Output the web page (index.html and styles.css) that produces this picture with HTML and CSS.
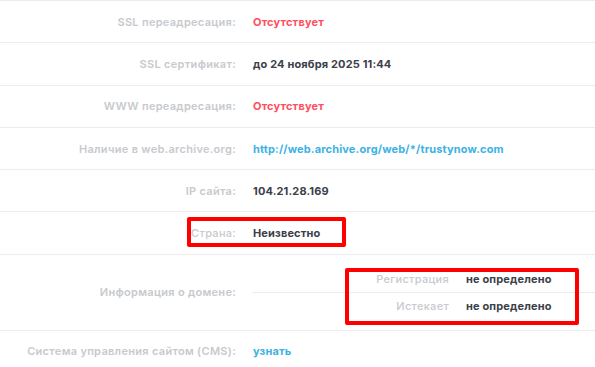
FILE: index.html
```html
<!DOCTYPE html>
<html lang="ru">
<head>
    <meta charset="UTF-8">
    <meta name="viewport" content="width=device-width, initial-scale=1.0">
    <title>Информация о сайте</title>
    <link rel="stylesheet" href="styles.css">
</head>
<body>
    <div class="info">
        <div class="row">
            <div class="label">SSL переадресация:</div>
            <div class="value bad">Отсутствует</div>
        </div>
        <div class="row">
            <div class="label">SSL сертификат:</div>
            <div class="value">до 24 ноября 2025 11:44</div>
        </div>
        <div class="row">
            <div class="label">WWW переадресация:</div>
            <div class="value bad">Отсутствует</div>
        </div>
        <div class="row">
            <div class="label">Наличие в web.archive.org:</div>
            <div class="value"><a href="#">http://web.archive.org/web/*/trustynow.com</a></div>
        </div>
        <div class="row">
            <div class="label">IP сайта:</div>
            <div class="value">104.21.28.169</div>
        </div>
        <div class="row">
            <div class="label light">Страна:</div>
            <div class="value">Неизвестно</div>
            <span class="mark mark-country"></span>
        </div>
        <div class="row row-domain">
            <div class="label">Информация о домене:</div>
            <div class="value">
                <div class="subrow">
                    <div class="sublabel">Регистрация</div>
                    <div>не определено</div>
                </div>
                <div class="subrow">
                    <div class="sublabel">Истекает</div>
                    <div>не определено</div>
                </div>
            </div>
            <span class="mark mark-domain"></span>
        </div>
        <div class="row last">
            <div class="label">Система управления сайтом (CMS):</div>
            <div class="value"><a href="#">узнать</a></div>
        </div>
    </div>
</body>
</html>
```

FILE: styles.css
```css
body {
    margin: 0;
    background: #fff;
    font-family: Inter, "Noto Sans", sans-serif;
    font-size: 11px;
    font-weight: 600;
    letter-spacing: 0.3px;
    color: #3b404a;
}

.info {
    border-top: 1px solid #ececec;
}

.row {
    position: relative;
    display: grid;
    grid-template-columns: 236px 1fr;
    column-gap: 17px;
    align-items: center;
    height: 41.3px;
    border-bottom: 1px solid #ececec;
}

.row.last {
    border-bottom: none;
}

.label {
    text-align: right;
    color: #c7cace;
}

.label.light {
    font-weight: 500;
}

.value {
    font-weight: 700;
    letter-spacing: 0.15px;
}

.value.bad {
    color: #ff4f62;
}

.value a {
    color: #3cb2e4;
    text-decoration: none;
}

.row-domain {
    height: auto;
    padding: 11px 0;
}

.row-domain .value {
    margin-left: -1px;
}

.subrow {
    display: grid;
    grid-template-columns: 197px 1fr;
    column-gap: 17px;
    align-items: center;
    height: 26px;
}

.subrow + .subrow {
    border-top: 1px solid #ececec;
}

.sublabel {
    text-align: right;
    color: #c7cace;
    font-weight: 500;
    letter-spacing: 0.3px;
}

.mark {
    position: absolute;
    border: 4px solid #ff0000;
    border-radius: 2px;
}

.mark-country {
    left: 187px;
    top: 5px;
    width: 151px;
    height: 22px;
}

.mark-domain {
    left: 345px;
    top: 13px;
    width: 226px;
    height: 49px;
}
```
